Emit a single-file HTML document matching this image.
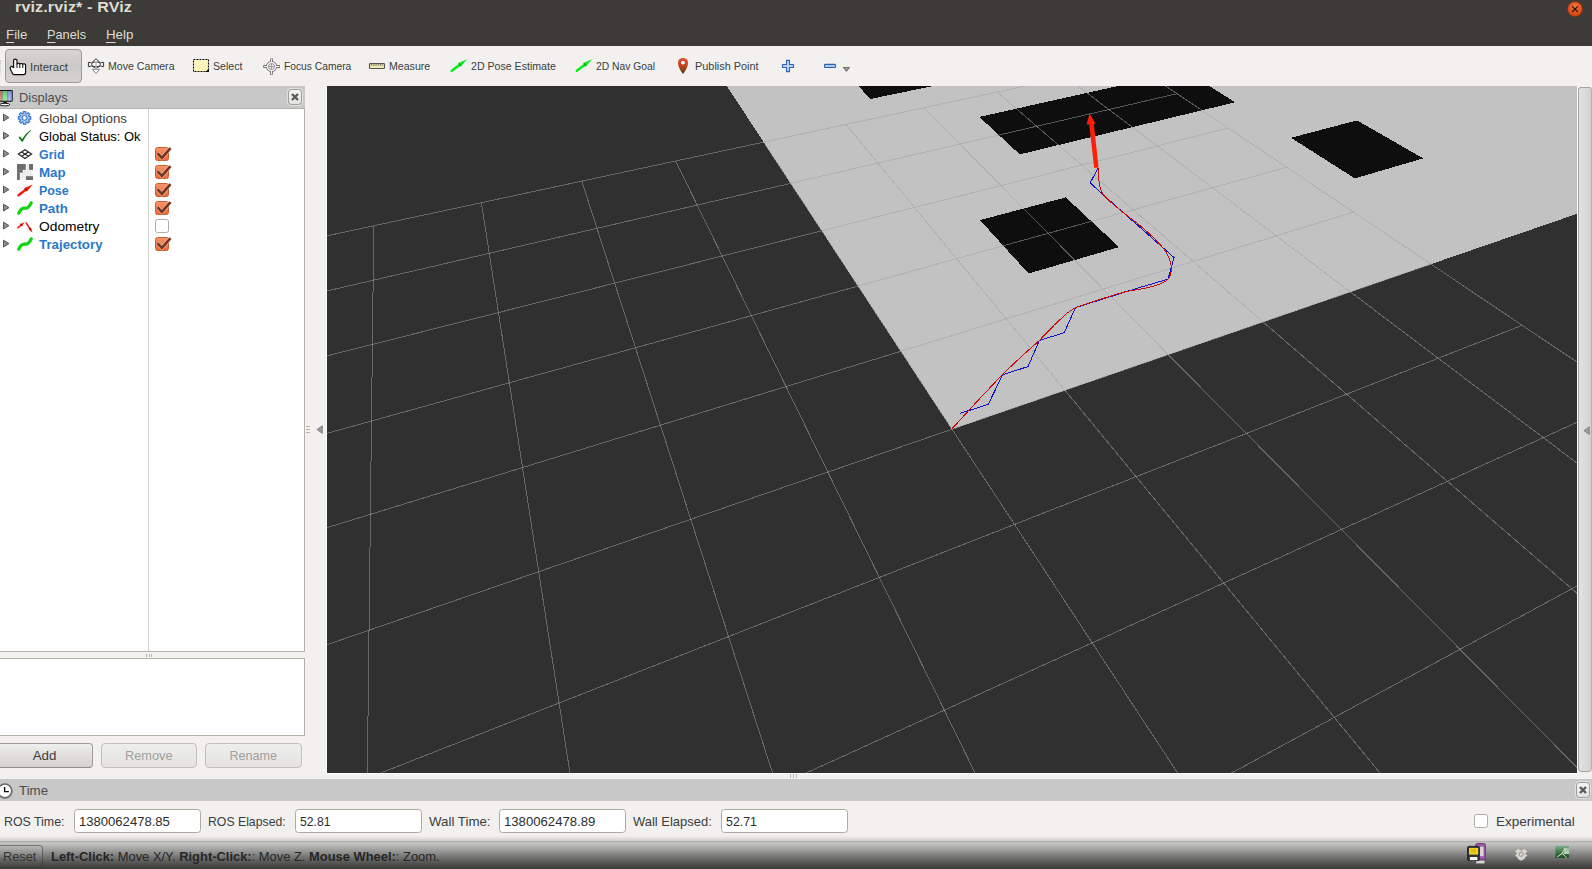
<!DOCTYPE html>
<html><head><meta charset="utf-8"><title>rviz</title>
<style>
*{box-sizing:border-box;margin:0;padding:0}
html,body{width:1592px;height:869px;overflow:hidden;background:#f2f1f0;font-family:"Liberation Sans",sans-serif;}
.abs{position:absolute}
#top{left:0;top:0;width:1592px;height:46px;background:#3c3b37}
#title{left:15px;top:-2px;transform:scaleX(1.152);transform-origin:0 0;font-weight:bold;font-size:14px;color:#dfdbd2;letter-spacing:0.1px;white-space:nowrap;line-height:18px}
.menu{top:27px;transform-origin:0 0;font-size:13.3px;color:#dfdbd2;line-height:16px;white-space:nowrap}
.menu u{text-decoration:underline;text-underline-offset:3px}
#closebtn{left:1566.500px;top:0.500px;width:16px;height:16px;border-radius:8px;background:radial-gradient(circle at 50% 35%,#f07746,#dd4814 70%,#c03a0c);border:1px solid #8a3010}
.tb{top:59px;transform-origin:0 0;font-size:10.6px;color:#3c3c3c;line-height:14px;white-space:nowrap}
#interact{left:5px;top:49px;width:77px;height:34px;border:1px solid #9c9a95;border-radius:4px;background:linear-gradient(#d6d5d3,#cbcac8 50%,#d3d2d0)}
.hdr{background:#c8c8c8;left:0}
.hdrtxt{transform-origin:0 0;font-size:13.3px;color:#4c4c4c;line-height:16px;white-space:nowrap}
.xbtn{width:14px;height:16px;border:1px solid #a09e9a;border-radius:3.5px;background:linear-gradient(#f4f4f3,#e2e2e1);box-shadow:0 0 0 1px rgba(255,255,255,.45)}
.row{left:0;height:18px;width:304px;font-size:13.3px;line-height:18px;white-space:nowrap}
.row .lbl{position:absolute;left:39px;top:1px;transform-origin:0 0}
.row .blue{color:#2a78c8;font-weight:bold}
.row .gry{color:#3c3c3c}
.row svg.arr{position:absolute;left:2px;top:4px}
.row svg.ic{position:absolute;left:17px;top:1px}
.cb{position:absolute;left:155px;top:2px;width:14px;height:14px;border-radius:2.500px}
.cb.on{background:linear-gradient(#f4946a,#ea6a3a);border:1px solid #cc5a2a}
.cb.off{background:#fff;border:1px solid #b0aca4}
.btn{top:743px;height:25px;border:1px solid #a09e99;border-bottom-color:#8e8c88;border-radius:4px;background:linear-gradient(#efefee,#dfdedc 55%,#d4d3d1);font-size:13.3px;text-align:center;line-height:23px;color:#3c3c3c}
.btn.dis{color:#a0a09c;border-color:#c2c0bb;background:linear-gradient(#eeeeed,#e4e3e1)}
.tl{top:814px;transform-origin:0 0;font-size:13.3px;color:#3c3c3c;line-height:16px;white-space:nowrap}
.ti{top:809px;height:24px;border:1px solid #aeaaa2;border-radius:3.5px;background:#fff;font-size:13.3px;color:#2c2c2c;line-height:24px;padding-left:3.5px;white-space:nowrap}
.ti span{display:inline-block;transform-origin:0 0}
#status{left:0;top:834px;width:1592px;height:35px;background:linear-gradient(#f2f1f0 0px,#efeeed 2px,#e4e3e1 4px,#d6d5d3 6px,#cfcecc 7.300px,#b2b0ac 7.500px,#b2b0ac 8.400px,#cacac9 8.600px,#a9a9a8 14px,#878786 20px,#646463 26px,#4a4a49 31px,#3a3a39 35px)}
.st{top:849px;transform-origin:0 0;font-size:13.3px;color:#2e2e2e;line-height:16px;white-space:nowrap}
</style></head><body>
<div id="top" class="abs"></div>
<div id="title" class="abs">rviz.rviz* - RViz</div>
<div class="abs menu" style="left:6px"><u>F</u>ile</div>
<div class="abs menu" style="left:47px;transform:scaleX(.96)"><u>P</u>anels</div>
<div class="abs menu" style="left:106px"><u>H</u>elp</div>
<div id="closebtn" class="abs"><svg width="14" height="14" style="position:absolute;left:0;top:0"><path d="M4.2 4.4 L9.8 10 M9.8 4.4 L4.2 10" stroke="#3a1205" stroke-width="1.3" fill="none"/></svg></div>

<!-- toolbar -->
<div id="interact" class="abs"></div>
<div class="abs" style="left:0;top:60px;width:2px;height:14px;border-left:1px dotted #c8c6c2"></div>
<div class="abs tb" style="left:30px;top:60px;transform:scaleX(1.076)">Interact</div>
<div class="abs tb" style="left:108px">Move Camera</div>
<div class="abs tb" style="left:213px">Select</div>
<div class="abs tb" style="left:284px;transform:scaleX(0.968)">Focus Camera</div>
<div class="abs tb" style="left:389px">Measure</div>
<div class="abs tb" style="left:471px">2D Pose Estimate</div>
<div class="abs tb" style="left:596px;transform:scaleX(0.974)">2D Nav Goal</div>
<div class="abs tb" style="left:695px;transform:scaleX(1.028)">Publish Point</div>
<svg class="abs" style="left:0;top:46px" width="900" height="40" viewBox="0 46 900 40">
 <!-- hand -->
 <path d="M13.6 67.6 V60.6 q0 -1.5 1.7 -1.5 q1.7 0 1.7 1.5 V63.9 q0.100 -0.700 1.400 -0.700 q1.300 0 1.400 0.900 q0.100 -0.600 1.500 -0.600 q1.400 0 1.500 0.900 q0.200 -0.500 1.500 -0.500 q1.300 0 1.300 1.300 V72 q0 2.600 -1.800 2.600 H14 q-1 0 -1.500 -1 L10.500 69.600 q-0.900 -1.700 0.100 -2.700 q1 -0.900 2 0.100 z" fill="#fff" stroke="#0a0a0a" stroke-width="1.150" stroke-linejoin="round"/>
 <path d="M17 63.900 V68 M19.800 64.200 V68 M22.800 64.500 V68" stroke="#0a0a0a" stroke-width="1"/>
 <!-- move camera -->
 <g stroke="#333" stroke-width="1" fill="#fff" stroke-linejoin="round">
  <path d="M96 58.800 L100.300 62.900 L103.600 62.300 V66.700 L100.300 65.900 Q98 67.700 96 67.700 Q94 67.700 91.700 65.900 L88.400 66.700 V62.300 L91.700 62.900 Z"/>
  <ellipse cx="96" cy="64.300" rx="4.300" ry="2.300" fill="none"/>
  <rect x="95.200" y="61" width="1.600" height="9" fill="#bdbdbd" stroke="none"/>
  <path d="M92.400 69.300 H99.600 L96 73.500 Z" stroke="#858585"/>
 </g>
 <!-- select -->
 <rect x="193.500" y="59.500" width="15" height="12" fill="#fdf5bc" stroke="#0a0a0a" stroke-width="1.100" stroke-dasharray="2 1"/>
 <path d="M209 68.400 v3.600 h-3.600 z" fill="#0a0a0a"/>
 <!-- focus -->
 <g fill="none">
  <path d="M271.500 58.400 V74.800 M263.200 66.500 H280" stroke="#777" stroke-width="2.800"/>
  <circle cx="271.500" cy="66.500" r="5.200" fill="#f2f1f0" stroke="#777" stroke-width="1"/>
  <path d="M271.500 59.200 V74 M264 66.500 H279.200" stroke="#f4f3f2" stroke-width="1"/>
  <circle cx="271.500" cy="66.500" r="3" stroke="#8a8a8a" stroke-width="0.900"/>
  <path d="M271.500 63.300 V69.700 M268.300 66.500 H274.700" stroke="#8a8a8a" stroke-width="0.800"/>
 </g>
 <!-- measure -->
 <rect x="369.500" y="63.500" width="15" height="5" rx="0.800" fill="#f4eaae" stroke="#555" stroke-width="1.150"/>
 <path d="M371.500 64 v1.800 M373.300 64 v1.800 M375.100 64 v1.800 M376.900 64 v1.800 M378.700 64 v1.800 M380.500 64 v1.800 M382.300 64 v1.800" stroke="#666" stroke-width="0.800"/>
 <!-- pose estimate -->
 <g><path d="M451.80 70.80 L459.66 64.85" stroke="#0aee1e" stroke-width="2.6" stroke-linecap="round"/><path d="M467.00 59.30 L460.99 66.61 L458.34 63.10 Z" fill="#0aee1e"/><path d="M461.10 66.25 L458.71 63.09" stroke="#0a7a14" stroke-width="1.1" opacity=".75"/></g>
 <g><path d="M576.80 70.80 L584.66 64.85" stroke="#0aee1e" stroke-width="2.6" stroke-linecap="round"/><path d="M592.00 59.30 L585.99 66.61 L583.34 63.10 Z" fill="#0aee1e"/><path d="M586.10 66.25 L583.71 63.09" stroke="#0a7a14" stroke-width="1.1" opacity=".75"/></g>
 <!-- publish point -->
 <defs><linearGradient id="pin" x1="0" y1="0" x2="0" y2="1"><stop offset="0" stop-color="#ea4a2a"/><stop offset=".4" stop-color="#cc4422"/><stop offset=".75" stop-color="#8a4018"/><stop offset="1" stop-color="#4a300a"/></linearGradient></defs>
 <path d="M683 74 Q678 67.500 678 62.900 a5 5 0 0 1 10 0 Q688 67.500 683 74 z" fill="url(#pin)"/>
 <circle cx="683" cy="62.600" r="1.900" fill="#f4ffff"/>
 <!-- plus / minus -->
 <path d="M786.500 60.400 h3 v4.100 h4 v3 h-4 v4.100 h-3 v-4.100 h-4 v-3 h4 z" fill="#bcd2f0" stroke="#2f62ae" stroke-width="1.100" stroke-linejoin="round"/>
 <rect x="824.500" y="64.400" width="11" height="3.100" rx="0.800" fill="#aec9ee" stroke="#2f62ae" stroke-width="1.100"/>
 <path d="M843.300 67.500 h6.300 l-3.150 3.900 z" fill="#9a9a9a" stroke="#666" stroke-width="0.900" stroke-linejoin="round"/>
</svg>

<!-- Displays panel -->
<div class="abs hdr" style="top:86px;width:305px;height:23px"></div>
<svg class="abs" style="left:0;top:89px" width="14" height="18" viewBox="0 0 14 18">
 <defs><linearGradient id="mr" x1="0" y1="0" x2="0" y2="1"><stop offset="0" stop-color="#c86464"/><stop offset="1" stop-color="#e89090"/></linearGradient><linearGradient id="mg" x1="0" y1="0" x2="0" y2="1"><stop offset="0" stop-color="#6cc06c"/><stop offset="1" stop-color="#a0eea0"/></linearGradient><linearGradient id="mb" x1="0" y1="0" x2="0" y2="1"><stop offset="0" stop-color="#8a8ae0"/><stop offset="1" stop-color="#b4b4ff"/></linearGradient></defs>
 <rect x="-2" y="1" width="14.700" height="11.700" rx="1.200" fill="#0a0a0a"/>
 <rect x="-1" y="2" width="3.300" height="9.700" fill="url(#mr)"/><rect x="2.300" y="2" width="5.400" height="9.700" fill="url(#mg)"/><rect x="7.700" y="2" width="4.100" height="9.700" fill="url(#mb)"/>
 <path d="M3.600 12.700 h3 l0.400 1.800 h-3.800 z" fill="#0a0a0a"/>
 <ellipse cx="4.800" cy="15.600" rx="5" ry="1.300" fill="#fff" stroke="#0a0a0a" stroke-width="0.900"/>
</svg>
<div class="abs hdrtxt" style="left:19px;top:90px;transform:scaleX(.968)">Displays</div>
<div class="abs xbtn" style="left:288px;top:89px"><svg width="12" height="14" style="position:absolute;left:0;top:0"><path d="M3 4 L9 10 M9 4 L3 10" stroke="#5a5a5a" stroke-width="2.4" fill="none"/></svg></div>
<div class="abs" style="left:-1px;top:108px;width:306px;height:544px;background:#fff;border:1px solid #b6b2aa"></div>
<div class="abs" style="left:148px;top:109px;width:1px;height:542px;background:#d4d2ce"></div>
<div class="abs row" style="top:109px"><svg class="arr" width="9" height="10"><path d="M1.500 1.200 L7 4.600 L1.500 8 Z" fill="#8e8e8e" stroke="#4a4a4a" stroke-width="0.900" stroke-linejoin="round"/></svg><svg class="ic" style="top:0.5px" width="16" height="16" viewBox="0 0 16 16"><path d="M6.28 1.63 L8.82 1.63 L8.80 3.37 L9.87 3.81 L11.09 2.57 L12.88 4.36 L11.64 5.58 L12.08 6.65 L13.82 6.63 L13.82 9.17 L12.08 9.15 L11.64 10.22 L12.88 11.44 L11.09 13.23 L9.87 11.99 L8.80 12.43 L8.82 14.17 L6.28 14.17 L6.30 12.43 L5.23 11.99 L4.01 13.23 L2.22 11.44 L3.46 10.22 L3.02 9.15 L1.28 9.17 L1.28 6.63 L3.02 6.65 L3.46 5.58 L2.22 4.36 L4.01 2.57 L5.23 3.81 L6.30 3.37 Z" fill="#a9c6ee" stroke="#3b78cf" stroke-width="1.100" stroke-linejoin="round"/><circle cx="7.55" cy="7.90" r="2.500" fill="#c6d9f3" stroke="#3b78cf" stroke-width="1"/><circle cx="7.55" cy="7.90" r="1.100" fill="#fff"/></svg><span class="lbl gry" style="transform:scaleX(1)">Global Options</span></div>
<div class="abs row" style="top:127px"><svg class="arr" width="9" height="10"><path d="M1.500 1.200 L7 4.600 L1.500 8 Z" fill="#8e8e8e" stroke="#4a4a4a" stroke-width="0.900" stroke-linejoin="round"/></svg><svg class="ic" width="16" height="16" viewBox="0 0 16 16"><path d="M1.500 9.500 l1.300 -1.200 l2.400 2.600 q3 -5.600 8.300 -9 l0.500 0.600 q-4.800 4.400 -8.300 11.300 h-0.900 z" fill="#1c7a1c"/></svg><span class="lbl " style="transform:scaleX(0.975)">Global Status: Ok</span></div>
<div class="abs row" style="top:145px"><svg class="arr" width="9" height="10"><path d="M1.500 1.200 L7 4.600 L1.500 8 Z" fill="#8e8e8e" stroke="#4a4a4a" stroke-width="0.900" stroke-linejoin="round"/></svg><svg class="ic" width="16" height="16" viewBox="0 0 16 16"><g fill="none" stroke="#262626" stroke-width="1.250"><path d="M8 3.700 l6.600 4.400 l-6.600 4.400 l-6.600 -4.400 z M4.700 5.900 l6.600 4.400 M11.300 5.900 l-6.600 4.400"/></g></svg><span class="lbl blue" style="transform:scaleX(0.934)">Grid</span><span class="cb on"><svg width="19" height="16" style="position:absolute;left:-1px;top:-1px"><path d="M2.600 6.400 l4.300 4.500 l8.600 -9.700" fill="none" stroke="#ffd2b8" stroke-opacity=".55" stroke-width="4.200"/><path d="M2.600 6.400 l4.300 4.500 l8.600 -9.700" fill="none" stroke="#6e3424" stroke-width="2.500"/></svg></span></div>
<div class="abs row" style="top:163px"><svg class="arr" width="9" height="10"><path d="M1.500 1.200 L7 4.600 L1.500 8 Z" fill="#8e8e8e" stroke="#4a4a4a" stroke-width="0.900" stroke-linejoin="round"/></svg><svg class="ic" width="16" height="16" viewBox="0 0 16 16"><rect width="16" height="16" fill="#fbfbfb"/><path d="M2.670 0 v16 M5.330 0 v16 M8 0 v16 M10.670 0 v16 M13.330 0 v16 M0 2.670 h16 M0 5.330 h16 M0 8 h16 M0 10.670 h16 M0 13.330 h16" stroke="#dcdcdc" stroke-width="0.700"/><g fill="#6c6c6c"><rect x="0" y="0" width="8.700" height="5.900"/><rect x="0" y="5.900" width="5.700" height="2.800"/><rect x="0" y="8.700" width="2.800" height="7.300"/><rect x="12" y="0" width="4" height="5.900"/><rect x="9" y="12.200" width="7" height="3.800"/></g></svg><span class="lbl blue" style="transform:scaleX(1)">Map</span><span class="cb on"><svg width="19" height="16" style="position:absolute;left:-1px;top:-1px"><path d="M2.600 6.400 l4.300 4.500 l8.600 -9.700" fill="none" stroke="#ffd2b8" stroke-opacity=".55" stroke-width="4.200"/><path d="M2.600 6.400 l4.300 4.500 l8.600 -9.700" fill="none" stroke="#6e3424" stroke-width="2.500"/></svg></span></div>
<div class="abs row" style="top:181px"><svg class="arr" width="9" height="10"><path d="M1.500 1.200 L7 4.600 L1.500 8 Z" fill="#8e8e8e" stroke="#4a4a4a" stroke-width="0.900" stroke-linejoin="round"/></svg><svg class="ic" width="17" height="16" viewBox="0 0 17 16"><path d="M1.50 13.20 L8.73 7.77" stroke="#f01a10" stroke-width="2.4" stroke-linecap="round"/><path d="M15.60 2.60 L9.99 9.45 L7.46 6.09 Z" fill="#f01a10"/><path d="M10.10 9.10 L7.83 6.08" stroke="#7a0a06" stroke-width="1.1" opacity=".75"/></svg><span class="lbl blue" style="transform:scaleX(0.93)">Pose</span><span class="cb on"><svg width="19" height="16" style="position:absolute;left:-1px;top:-1px"><path d="M2.600 6.400 l4.300 4.500 l8.600 -9.700" fill="none" stroke="#ffd2b8" stroke-opacity=".55" stroke-width="4.200"/><path d="M2.600 6.400 l4.300 4.500 l8.600 -9.700" fill="none" stroke="#6e3424" stroke-width="2.500"/></svg></span></div>
<div class="abs row" style="top:199px"><svg class="arr" width="9" height="10"><path d="M1.500 1.200 L7 4.600 L1.500 8 Z" fill="#8e8e8e" stroke="#4a4a4a" stroke-width="0.900" stroke-linejoin="round"/></svg><svg class="ic" width="16" height="16" viewBox="0 0 16 16"><path d="M1.800 13.200 q2.200 -5.400 6 -5 t6.400 -5.400" fill="none" stroke="#0fd40f" stroke-width="3.200" stroke-linecap="round"/></svg><span class="lbl blue" style="transform:scaleX(1)">Path</span><span class="cb on"><svg width="19" height="16" style="position:absolute;left:-1px;top:-1px"><path d="M2.600 6.400 l4.300 4.500 l8.600 -9.700" fill="none" stroke="#ffd2b8" stroke-opacity=".55" stroke-width="4.200"/><path d="M2.600 6.400 l4.300 4.500 l8.600 -9.700" fill="none" stroke="#6e3424" stroke-width="2.500"/></svg></span></div>
<div class="abs row" style="top:217px"><svg class="arr" width="9" height="10"><path d="M1.500 1.200 L7 4.600 L1.500 8 Z" fill="#8e8e8e" stroke="#4a4a4a" stroke-width="0.900" stroke-linejoin="round"/></svg><svg class="ic" width="17" height="16" viewBox="0 0 17 16"><path d="M0.80 9.80 L4.05 7.12" stroke="#f01a10" stroke-width="1.5" stroke-linecap="round"/><path d="M7.60 4.20 L5.00 8.28 L3.10 5.97 Z" fill="#f01a10"/><path d="M5.14 7.98 L3.42 5.89" stroke="#7a0a06" stroke-width="1.1" opacity=".75"/><path d="M9.20 5.00 L12.87 10.56" stroke="#f01a10" stroke-width="1.5" stroke-linecap="round"/><path d="M15.40 14.40 L11.62 11.39 L14.12 9.73 Z" fill="#f01a10"/><path d="M11.91 11.55 L14.16 10.07" stroke="#7a0a06" stroke-width="1.1" opacity=".75"/></svg><span class="lbl " style="transform:scaleX(1.036)">Odometry</span><span class="cb off"></span></div>
<div class="abs row" style="top:235px"><svg class="arr" width="9" height="10"><path d="M1.500 1.200 L7 4.600 L1.500 8 Z" fill="#8e8e8e" stroke="#4a4a4a" stroke-width="0.900" stroke-linejoin="round"/></svg><svg class="ic" width="16" height="16" viewBox="0 0 16 16"><path d="M1.800 13.200 q2.200 -5.400 6 -5 t6.400 -5.400" fill="none" stroke="#0fd40f" stroke-width="3.200" stroke-linecap="round"/></svg><span class="lbl blue" style="transform:scaleX(1)">Trajectory</span><span class="cb on"><svg width="19" height="16" style="position:absolute;left:-1px;top:-1px"><path d="M2.600 6.400 l4.300 4.500 l8.600 -9.700" fill="none" stroke="#ffd2b8" stroke-opacity=".55" stroke-width="4.200"/><path d="M2.600 6.400 l4.300 4.500 l8.600 -9.700" fill="none" stroke="#6e3424" stroke-width="2.500"/></svg></span></div>
<div class="abs" style="left:146px;top:654px;width:6px;height:3px;border-left:1px solid #b8b6b0;border-right:1px solid #b8b6b0"><div style="margin-left:1.5px;width:1px;height:3px;background:#b8b6b0"></div></div>
<div class="abs" style="left:-1px;top:658px;width:306px;height:78px;background:#fff;border:1px solid #b6b2aa"></div>
<div class="abs btn" style="left:-4px;width:97px">Add</div>
<div class="abs btn dis" style="left:101px;width:96px"><span style="display:inline-block;transform:scaleX(.96)">Remove</span></div>
<div class="abs btn dis" style="left:205px;width:97px"><span style="display:inline-block;transform:scaleX(.945)">Rename</span></div>

<!-- splitter left -->
<div class="abs" style="left:306px;top:426px;width:4px;height:1px;background:#b4b2ac;box-shadow:0 3px 0 #b4b2ac,0 6px 0 #b4b2ac"></div>
<svg class="abs" style="left:316px;top:425px" width="8" height="10"><path d="M6.3 0.8 v7.6 l-5.4 -3.8 z" fill="#9a9a9a" stroke="#7a7a7a" stroke-width="0.8"/></svg>
<div class="abs" style="left:326px;top:86px;width:1px;height:687px;background:#fbfbfb"></div>

<!-- 3D view -->
<div class="abs" style="left:327px;top:86px;width:1250px;height:687px;overflow:hidden"><svg id="scene" width="1250" height="687" viewBox="0 0 1250 687">
<rect width="1250" height="687" fill="#303030"/>
<g shape-rendering="crispEdges">
<polygon points="373.5,-40.1 625.0,343.3 1429.9,65.8 949.6,-140.8" fill="#c2c2c2"/>
<polygon points="653.0,134.1 738.8,111.4 792.1,161.1 701.5,187.5" fill="#0e0e0e"/>
<polygon points="652.4,30.9 858.6,-15.1 908.1,16.3 692.7,68.4" fill="#0e0e0e"/>
<polygon points="964.0,51.8 1030.0,34.4 1096.2,72.4 1027.8,92.4" fill="#0e0e0e"/>
<polygon points="515.1,-18.1 585.3,-31.6 616.9,-2.2 543.3,13.0" fill="#0e0e0e"/>
</g>
<g stroke="#a0a0a4" stroke-opacity="0.5" stroke-width="1" shape-rendering="crispEdges">
<line x1="-68.9" y1="164.6" x2="-517.3" y2="2671.3"/>
<line x1="46.8" y1="139.8" x2="22.5" y2="2199.9"/>
<line x1="154.4" y1="116.7" x2="423.5" y2="1849.7"/>
<line x1="254.8" y1="95.2" x2="733.1" y2="1579.3"/>
<line x1="348.7" y1="75.1" x2="979.4" y2="1364.2"/>
<line x1="436.7" y1="56.2" x2="1180.0" y2="1189.0"/>
<line x1="519.2" y1="38.5" x2="1346.5" y2="1043.5"/>
<line x1="596.9" y1="21.8" x2="1487.0" y2="920.9"/>
<line x1="670.2" y1="6.1" x2="1607.1" y2="816.0"/>
<line x1="739.3" y1="-8.7" x2="1710.9" y2="725.3"/>
<line x1="804.6" y1="-22.8" x2="1801.5" y2="646.1"/>
<line x1="-68.9" y1="164.6" x2="804.6" y2="-22.8"/>
<line x1="-79.4" y1="223.4" x2="850.0" y2="7.7"/>
<line x1="-91.9" y1="293.1" x2="901.3" y2="42.1"/>
<line x1="-106.9" y1="377.0" x2="959.6" y2="81.2"/>
<line x1="-125.3" y1="480.2" x2="1026.5" y2="126.1"/>
<line x1="-148.6" y1="609.9" x2="1104.1" y2="178.1"/>
<line x1="-178.6" y1="778.1" x2="1195.2" y2="239.3"/>
<line x1="-219.2" y1="1004.7" x2="1303.5" y2="312.0"/>
<line x1="-276.7" y1="1326.6" x2="1434.7" y2="400.0"/>
<line x1="-365.0" y1="1819.9" x2="1596.6" y2="508.6"/>
<line x1="-517.3" y1="2671.3" x2="1801.5" y2="646.1"/>
</g>
<polyline points="771.0,82.1 763.2,96.9 772.9,105.8 847.0,171.5 841.0,193.2 813.0,201.4 748.4,221.6 737.3,246.7 712.4,254.4 701.0,280.6 675.6,288.7 661.3,318.3 633.3,327.3" fill="none" stroke="#1010c8" stroke-width="1" shape-rendering="crispEdges"/>
<polyline points="771.0,82.1 771.1,83.7 771.2,85.8 771.4,88.4 771.6,91.1 771.9,93.8 772.2,96.1 772.6,98.1 772.9,100.1 773.3,101.9 773.9,103.7 774.5,105.4 775.3,107.0 776.2,108.5 777.3,109.8 778.4,111.1 779.8,112.4 781.3,113.8 783.0,115.4 785.0,117.2 787.2,119.1 789.7,121.1 792.2,123.2 794.9,125.4 797.5,127.5 800.2,129.6 803.0,131.8 806.0,134.1 808.9,136.3 811.7,138.6 814.4,140.8 817.0,143.0 819.5,145.2 822.0,147.5 824.4,149.7 826.7,151.9 828.9,154.1 831.0,156.3 833.0,158.5 835.0,160.8 836.8,163.0 838.4,165.2 839.8,167.4 841.0,169.6 842.0,171.9 842.8,174.2 843.4,176.5 843.9,178.6 844.2,180.7 844.3,182.7 844.2,184.7 844.0,186.5 843.6,188.3 843.0,190.0 842.2,191.5 841.3,192.8 840.2,193.9 838.9,194.9 837.5,195.8 835.8,196.7 833.8,197.6 831.5,198.5 828.9,199.3 826.0,200.2 823.0,200.9 820.0,201.7 816.9,202.4 813.9,203.0 810.8,203.6 807.6,204.0 804.4,204.6 801.0,205.2 797.5,206.0 793.8,207.0 789.8,208.1 785.8,209.4 781.7,210.7 777.5,212.0 773.4,213.3 769.0,214.7 764.2,216.3 759.4,217.9 754.9,219.4 751.1,220.7 748.4,221.6" fill="none" stroke="#c80a0a" stroke-width="1" shape-rendering="crispEdges"/>
<polyline points="748.4,221.6 740.1,227.1 727.2,239.1 712.4,254.4 695.9,269.1 675.6,288.3 650.8,314.6 625.0,342.8" fill="none" stroke="#c80a0a" stroke-width="1" shape-rendering="crispEdges"/>
<polygon points="762.2,38.2 766.8,38.0 771.6,81.4 767.2,82.0" fill="#ff1e0a"/>
<polygon points="762.6,27.5 759.6,38.6 768.6,38.0" fill="#ff1e0a"/>
</svg></div>

<div class="abs" style="left:326px;top:773px;width:1252px;height:1px;background:#fbfbfb"></div>
<!-- right collapsed panel -->
<div class="abs" style="left:1577px;top:86px;width:1px;height:687px;background:#fbfbfb"></div>
<div class="abs" style="left:1578px;top:87px;width:14px;height:685px;border:1px solid #a6a4a0;border-right-color:#b4b2ae;border-radius:3px 3px 4px 4px;background:linear-gradient(90deg,#e2e2e2,#d2d2d2)"></div>
<svg class="abs" style="left:1583px;top:426px" width="8" height="10"><path d="M6.3 0.8 v7.6 l-5.4 -3.8 z" fill="#9a9a9a" stroke="#7a7a7a" stroke-width="0.8"/></svg>
<div class="abs" style="left:790px;top:774px;width:1px;height:4px;background:#bcb9b4;box-shadow:3px 0 0 #bcb9b4,6px 0 0 #bcb9b4"></div>

<!-- Time panel -->
<div class="abs hdr" style="top:779px;width:1592px;height:22px"></div>
<svg class="abs" style="left:0;top:782px" width="14" height="18" viewBox="0 0 14 18"><circle cx="4.900" cy="8.900" r="6.900" fill="#fff" stroke="#6a6a6a" stroke-width="1.700"/><path d="M4.600 5 v4.600 h4.300" stroke="#0a0a0a" stroke-width="1.400" fill="none"/></svg>
<div class="abs hdrtxt" style="left:19px;top:783px">Time</div>
<div class="abs xbtn" style="left:1576px;top:782px"><svg width="12" height="14" style="position:absolute;left:0;top:0"><path d="M3 4 L9 10 M9 4 L3 10" stroke="#5a5a5a" stroke-width="2.4" fill="none"/></svg></div>
<div class="abs tl" style="left:4px;transform:scaleX(.93)">ROS Time:</div>
<div class="abs ti" style="left:74px;width:127px"><span style="transform:scaleX(.983)">1380062478.85</span></div>
<div class="abs tl" style="left:208px;transform:scaleX(.922)">ROS Elapsed:</div>
<div class="abs ti" style="left:295px;width:127px"><span style="transform:scaleX(.915)">52.81</span></div>
<div class="abs tl" style="left:429px">Wall Time:</div>
<div class="abs ti" style="left:499px;width:127px"><span style="transform:scaleX(.988)">1380062478.89</span></div>
<div class="abs tl" style="left:633px;transform:scaleX(.975)">Wall Elapsed:</div>
<div class="abs ti" style="left:721px;width:127px"><span style="transform:scaleX(.93)">52.71</span></div>
<div class="abs" style="left:1474px;top:814px;width:14px;height:14px;border:1px solid #b0aca4;border-radius:2.5px;background:#fff"></div>
<div class="abs tl" style="left:1496px;transform:scaleX(1.015)">Experimental</div>

<!-- status bar -->
<div id="status" class="abs"></div>
<div class="abs" style="left:-3px;top:845px;width:46px;height:22px;border:1px solid rgba(50,50,50,.5);border-radius:3.5px;background:linear-gradient(rgba(255,255,255,.06),rgba(255,255,255,.0))"></div>
<div class="abs st" style="left:2.500px;color:#343434;transform:scaleX(.96)">Reset</div>
<div class="abs st" style="left:50.500px;color:#262626;transform:scaleX(.971)"><b>Left-Click:</b> Move X/Y. <b>Right-Click:</b>: Move Z. <b>Mouse Wheel:</b>: Zoom.</div>
<svg class="abs" style="left:1460px;top:842px" width="120" height="27" viewBox="1460 842 120 27">
 <defs><linearGradient id="gg" x1="0" y1="0" x2="0" y2="1"><stop offset="0" stop-color="#7fae8a"/><stop offset=".5" stop-color="#3f7a4c"/><stop offset="1" stop-color="#1f4a28"/></linearGradient>
 <linearGradient id="gl" x1="0" y1="0" x2="0" y2="1"><stop offset="0" stop-color="#9cc4a4"/><stop offset="1" stop-color="#d4e6d4"/></linearGradient></defs>
 <rect x="1475.700" y="843.600" width="9.700" height="15.800" rx="1.600" fill="#9a5ca4" stroke="#76367e" stroke-width="1"/>
 <rect x="1480.100" y="846.700" width="3.400" height="9.500" fill="#ddd6de"/>
 <rect x="1476.200" y="860.600" width="8.300" height="2.800" fill="#d6d6d4"/>
 <rect x="1467.600" y="846.400" width="11.700" height="14.200" rx="1.200" fill="#2e3436" stroke="#24282a" stroke-width="1"/>
 <rect x="1469" y="847.900" width="9.200" height="6.700" fill="#f0d020"/>
 <path d="M1471 850 h5 M1471 852 h5" stroke="#c8a410" stroke-width="0.800"/>
 <rect x="1469.900" y="857" width="7.500" height="3.200" fill="#f6f2ec"/>
 <path d="M1515 851.400 l3.100 -2.600 l3.100 2.200 l3.100 -2.200 l3.100 2.600 l-2.300 2.100 l2.300 2.100 l-2.600 1.900 v1.300 l-3.600 2 l-3.600 -2 v-1.300 l-2.600 -1.900 l2.300 -2.100 z" fill="#dad6ce"/>
 <circle cx="1521.200" cy="854.300" r="2.100" fill="none" stroke="#8e8c88" stroke-width="0.900"/>
 <rect x="1555.400" y="845.900" width="13.600" height="12.100" fill="url(#gg)"/>
 <path d="M1565 848 h4 v6 h-5.600 z" fill="url(#gl)" opacity=".85"/>
 <path d="M1565.200 848 l-3 5.400 l4.400 4.400 M1562.200 853.400 l-5 3.600" stroke="#e6eec0" stroke-width="1" fill="none"/>
</svg>
</body></html>
